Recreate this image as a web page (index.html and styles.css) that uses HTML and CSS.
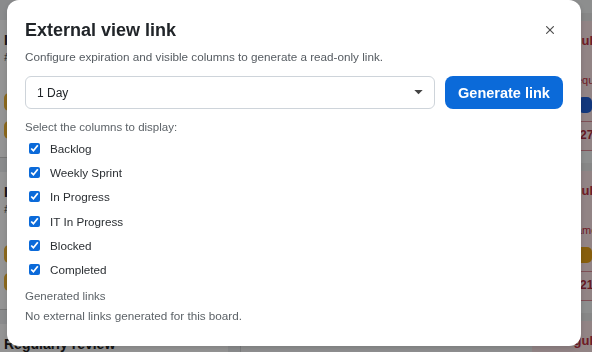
FILE: index.html
```html
<!DOCTYPE html>
<html>
<head>
<meta charset="utf-8">
<link rel="stylesheet" href="styles.css">
</head>
<body>
<div class="board">
  <div class="col col-left">
    <div class="card">
      <div class="card-title">In</div>
      <div class="card-meta">#1</div>
      <div class="chip chip-orange"></div>
      <div class="chip chip-orange"></div>
    </div>
    <div class="card">
      <div class="card-title">In</div>
      <div class="card-meta">#1</div>
      <div class="chip chip-orange"></div>
      <div class="chip chip-orange"></div>
    </div>
    <div class="card">
      <div class="card-title">Regularly review</div>
    </div>
  </div>
  <div class="col col-mid"></div>
  <div class="col col-right">
    <div class="pcard">
      <div class="ptitle">Regular</div>
      <div class="psub">Required</div>
      <div class="pchip pchip-blue"></div>
      <div class="pdate">27/03</div>
    </div>
    <div class="pcard">
      <div class="ptitle">Regular</div>
      <div class="psub">Named</div>
      <div class="pchip pchip-orange"></div>
      <div class="pdate">21/03</div>
    </div>
    <div class="pcard">
      <div class="ptitle">Regular</div>
    </div>
  </div>
</div>

<div class="backdrop">
  <div class="modal">
    <div class="modal-head">
      <h2 class="modal-title">External view link</h2>
      <button class="close" aria-label="Close">
        <svg width="8" height="8" viewBox="0 0 8 8"><path d="M0.6 0.6 L7.4 7.4 M7.4 0.6 L0.6 7.4" stroke="#505050" stroke-width="1.2" stroke-linecap="round"/></svg>
      </button>
    </div>
    <p class="desc">Configure expiration and visible columns to generate a read-only link.</p>
    <div class="controls">
      <div class="select">
        <span>1 Day</span>
        <svg class="caret" width="10" height="6" viewBox="0 0 10 6"><path d="M0 0 L10 0 L5 5 Z" fill="#444"/></svg>
      </div>
      <button class="gen">Generate link</button>
    </div>
    <div class="label">Select the columns to display:</div>
    <div class="checks">
      <label class="check"><input type="checkbox" checked><span>Backlog</span></label>
      <label class="check"><input type="checkbox" checked><span>Weekly Sprint</span></label>
      <label class="check"><input type="checkbox" checked><span>In Progress</span></label>
      <label class="check"><input type="checkbox" checked><span>IT In Progress</span></label>
      <label class="check"><input type="checkbox" checked><span>Blocked</span></label>
      <label class="check"><input type="checkbox" checked><span>Completed</span></label>
    </div>
    <div class="label gl">Generated links</div>
    <div class="empty">No external links generated for this board.</div>
  </div>
</div>
</body>
</html>
```

FILE: styles.css
```css
* { box-sizing: border-box; }
html, body { margin: 0; padding: 0; }
body {
  width: 592px;
  height: 352px;
  overflow: hidden;
  font-family: "Liberation Sans", Arial, sans-serif;
  background: #eef0f2;
}
.board {
  display: grid;
  grid-template-columns: 228px 12px 290px 62px;
  height: 352px;
}
.col-left { display: flex; flex-direction: column; gap: 14px; padding-top: 20px; }
.col-mid { grid-column: 3; background: #f6f7f8; border-left: 1px solid #d6d8da; }
.col-right { grid-column: 4; display: flex; flex-direction: column; gap: 12px; padding-top: 13px; padding-left: 2px; background: #f3f4f5; }
.card { background: #fff; padding: 12px 4px 8px; border-bottom: 1px solid #ccc; }
.card-title { font-weight: bold; font-size: 14px; color: #222; }
.card-meta { font-size: 11px; color: #444; margin: 3px 0 30px; }
.chip { display: block; width: 60px; height: 18px; border-radius: 5px; margin-bottom: 10px; }
.chip-orange { background: #f2b632; }
.pcard { background: #fbe3e6; border-top: 8px solid #e8e8e8; border-bottom: 1px solid #d98a95; padding: 12px 0 8px 4px; }
.ptitle { color: #c0303f; font-weight: bold; font-size: 13px; line-height: 15px; padding-left: 21px; white-space: nowrap; }
.psub { color: #c0303f; font-size: 11px; line-height: 14px; margin-top: 25px; padding-left: 32px; white-space: nowrap; }
.pchip { height: 16px; border-radius: 5px; margin-top: 10px; }
.pchip-blue { background: #1f5fd6; margin-left: 42px; }
.pchip-orange { background: #e8a317; margin-left: 40px; }
.pdate { color: #b03040; font-weight: bold; font-size: 12px; line-height: 14px; border-top: 1px solid #d98a95; margin-top: 8px; padding-top: 6px; padding-left: 44px; white-space: nowrap; }

.backdrop {
  position: fixed;
  inset: 0;
  background: rgba(0, 0, 0, 0.42);
}
.modal {
  width: 574px;
  height: 346px;
  margin-left: 7px;
  background: #fff;
  border-radius: 12px;
  padding: 19px 18px 0 18px;
  box-shadow: 0 2px 6px rgba(0,0,0,0.15);
}
.modal-head {
  display: flex;
  justify-content: space-between;
  align-items: flex-start;
}
.modal-title {
  margin: 0;
  font-size: 18px;
  line-height: 22px;
  font-weight: bold;
  color: #212529;
}
.close {
  border: 0;
  background: none;
  padding: 0;
  width: 8px;
  height: 8px;
  margin: 7px 9px 0 0;
  display: flex;
}
.desc {
  margin: 8px 0 0;
  font-size: 11.7px;
  line-height: 16px;
  color: #555b61;
}
.controls {
  display: flex;
  gap: 10px;
  margin-top: 11px;
  height: 33px;
}
.select {
  flex: 1;
  border: 1px solid #ced4da;
  border-radius: 6px;
  display: flex;
  align-items: center;
  justify-content: space-between;
  padding: 0 11px 0 11px;
  font-size: 12px;
  color: #212529;
}
.caret { width: 9px; height: 5px; }
.gen {
  width: 118px;
  border: 0;
  border-radius: 8px;
  background: #0b6ad9;
  color: #fff;
  font-family: "Liberation Sans", Arial, sans-serif;
  font-weight: bold;
  font-size: 14.5px;
  padding: 0;
}
.label {
  margin-top: 10px;
  font-size: 11.5px;
  line-height: 16px;
  color: #5d6368;
}
.checks { display: flex; flex-direction: column; margin-top: 1.5px; }
.check {
  display: flex;
  align-items: center;
  height: 24.2px;
  font-size: 11.7px;
  color: #2b2f33;
}
.check input {
  width: 11px;
  height: 11px;
  margin: 0 10px 0 4px;
  accent-color: #0b6ad9;
}
.gl { margin-top: 6.5px; }
.empty {
  margin-top: 4px;
  font-size: 11.7px;
  line-height: 16px;
  color: #5d6368;
}
```
